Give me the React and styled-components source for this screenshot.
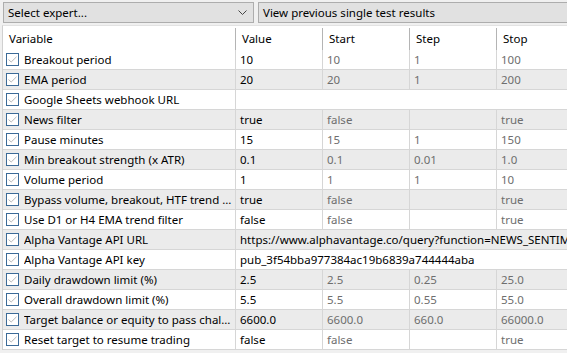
import React from 'react'
import styled, { createGlobalStyle, css } from 'styled-components'

const params = [
    { name: 'Breakout period', value: '10', start: '10', step: '1', stop: '100' },
    { name: 'EMA period', value: '20', start: '20', step: '1', stop: '200' },
    { name: 'Google Sheets webhook URL', value: '', wide: true },
    { name: 'News filter', value: 'true', start: 'false', step: '', stop: 'true' },
    { name: 'Pause minutes', value: '15', start: '15', step: '1', stop: '150' },
    { name: 'Min breakout strength (x ATR)', value: '0.1', start: '0.1', step: '0.01', stop: '1.0' },
    { name: 'Volume period', value: '1', start: '1', step: '1', stop: '10' },
    { name: 'Bypass volume, breakout, HTF trend f...', value: 'true', start: 'false', step: '', stop: 'true' },
    { name: 'Use D1 or H4 EMA trend filter', value: 'false', start: 'false', step: '', stop: 'true' },
    { name: 'Alpha Vantage API URL', value: 'https://www.alphavantage.co/query?function=NEWS_SENTIMENT&tickers=FOREX', wide: true },
    { name: 'Alpha Vantage API key', value: 'pub_3f54bba977384ac19b6839a744444aba', wide: true },
    { name: 'Daily drawdown limit (%)', value: '2.5', start: '2.5', step: '0.25', stop: '25.0' },
    { name: 'Overall drawdown limit (%)', value: '5.5', start: '5.5', step: '0.55', stop: '55.0' },
    { name: 'Target balance or equity to pass chall...', value: '6600.0', start: '6600.0', step: '660.0', stop: '66000.0' },
    { name: 'Reset target to resume trading', value: 'false', start: 'false', step: '', stop: 'true' },
]

const GlobalStyle = createGlobalStyle`
    html, body {
        margin: 0;
        padding: 0;
        background: #f0f0f0;
        overflow: hidden;
    }
    body {
        font-family: "Noto Sans", "Open Sans", sans-serif;
        font-size: 11.5px;
        color: #000000;
    }
`

const App = () => {
  return (
    <>
        <GlobalStyle />
        <Page>
            <Toolbar>
                <Combo>
                    <span>{'Select expert...'}</span>
                    <svg width="9" height="5" viewBox="0 0 9 5">
                        <path d="M0.5 0.5 L4.5 4.5 L8.5 0.5" fill="none" stroke="#444" strokeWidth="1" />
                    </svg>
                </Combo>
                <ToolButton>{'View previous single test results'}</ToolButton>
            </Toolbar>
            <Table>
                <HeaderRow>
                    <HeadCell>{'Variable'}</HeadCell>
                    <HeadCell>{'Value'}</HeadCell>
                    <HeadCell>{'Start'}</HeadCell>
                    <HeadCell>{'Step'}</HeadCell>
                    <HeadCell>{'Stop'}</HeadCell>
                </HeaderRow>
                {params.map((p, i) => (
                    <Row key={p.name} shaded={i % 2 === 1}>
                        <NameCell>
                            <Check>
                                <svg width="9" height="7" viewBox="0 0 9 7">
                                    <path d="M0.5 3.5 L3.2 6 L8.5 0.8" fill="none" stroke="#b8b8b8" strokeWidth="1" />
                                </svg>
                            </Check>
                            <NameText>{p.name}</NameText>
                        </NameCell>
                        {p.wide ? (
                            <Cell wide>{p.value}</Cell>
                        ) : (
                            <>
                                <Cell>{p.value}</Cell>
                                <Cell muted>{p.start}</Cell>
                                <Cell muted>{p.step}</Cell>
                                <Cell muted>{p.stop}</Cell>
                            </>
                        )}
                    </Row>
                ))}
            </Table>
        </Page>
    </>
  )
}

export default App

const Page = styled.div`
    width: 567px;
    height: 353px;
    overflow: hidden;
    background: #f0f0f0;
    display: flex;
    flex-direction: column;
`

const Toolbar = styled.div`
    height: 25px;
    box-sizing: border-box;
    padding: 2px 0 0 3px;
    display: flex;
    gap: 4px;
    flex-shrink: 0;
`

const controlBox = css`
    height: 21px;
    box-sizing: border-box;
    border: 1px solid #adadad;
    background: #e1e1e1;
    display: flex;
    align-items: center;
    padding: 0 4px;
    white-space: nowrap;
    flex-shrink: 0;
`

const Combo = styled.div`
    ${controlBox};
    width: 251px;
    justify-content: space-between;
    padding-right: 6px;
`

const ToolButton = styled.div`
    ${controlBox};
    width: 330px;
`

const Table = styled.div`
    margin-left: 2px;
    width: 600px;
    background: #ffffff;
    border-left: 1px solid #d0d0d0;
    border-top: 1px solid #e3e3e3;
`

const columns = css`
    display: grid;
    grid-template-columns: 233px 87px 87px 87px 106px;
`

const HeaderRow = styled.div`
    ${columns};
    height: 24px;
    padding-top: 2px;
    box-sizing: border-box;
    background: #ffffff;
`

const HeadCell = styled.div`
    border-right: 1px solid #b4b4b4;
    padding-left: 6px;
    display: flex;
    align-items: center;
    padding-bottom: 2px;
`

const Row = styled.div`
    ${columns};
    height: 20px;
    box-sizing: border-box;
    border-bottom: 1px solid #d6d6d6;
    background: ${(props) => props.shaded ? '#ebebeb' : '#ffffff'};
`

const NameCell = styled.div`
    border-right: 1px solid #d6d6d6;
    display: flex;
    align-items: center;
    gap: 5px;
    padding-left: 3px;
    white-space: nowrap;
    overflow: hidden;
    min-width: 0;
`

const NameText = styled.span`
    overflow: hidden;
    text-overflow: ellipsis;
    padding-right: 2px;
`

const Check = styled.span`
    width: 13px;
    height: 13px;
    box-sizing: border-box;
    border: 1px solid #3b6a97;
    background: #ffffff;
    display: flex;
    align-items: center;
    justify-content: center;
    flex-shrink: 0;
`

const Cell = styled.div`
    border-right: 1px solid #d6d6d6;
    padding-left: 4px;
    display: flex;
    align-items: center;
    white-space: nowrap;
    overflow: hidden;
    min-width: 0;
    color: ${(props) => props.muted ? '#6e6e6e' : '#000000'};
    ${({ wide }) => wide && css`
        grid-column: 2 / -1;
        border-right: none;
    `};
`
